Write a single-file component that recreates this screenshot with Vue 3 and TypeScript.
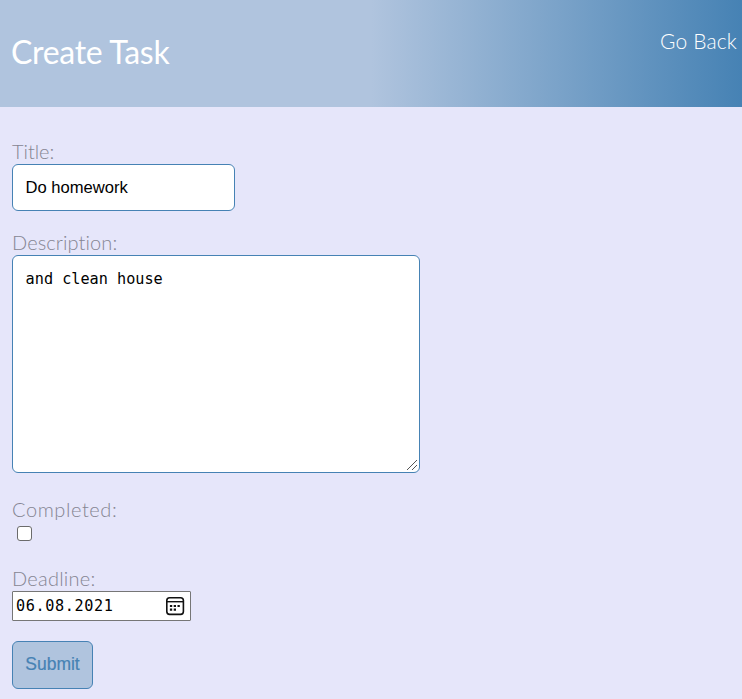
<script setup lang="ts">
import { ref } from 'vue'

const title = ref('Do homework')
const description = ref('and clean house')
const completed = ref(false)
const deadline = ref('06.08.2021')
</script>

<template>
  <div class="page">
    <header class="header">
      <h1>Create Task</h1>
      <a class="back">Go Back</a>
    </header>
    <form class="form" @submit.prevent>
      <label class="label" for="title"><span class="l-title">Title:</span></label>
      <input id="title" v-model="title" class="title" type="text" />
      <label class="label" for="description"><span class="l-description">Description:</span></label>
      <div class="area">
        <textarea id="description" v-model="description" spellcheck="false"></textarea>
        <svg class="grip" width="12" height="12" viewBox="0 0 12 12">
          <path d="M1 11L11 1M6 11L11 6" stroke="#555" stroke-width="1" fill="none" />
        </svg>
      </div>
      <label class="label" for="completed"><span class="l-completed">Completed:</span></label>
      <input id="completed" v-model="completed" class="check" type="checkbox" />
      <label class="label" for="deadline"><span class="l-deadline">Deadline:</span></label>
      <div class="date">
        <input id="deadline" v-model="deadline" type="text" />
        <svg width="20" height="20" viewBox="0 0 20 20">
          <rect x="1.8" y="1.8" width="16.6" height="16.6" rx="2.8" fill="none" stroke="#111" stroke-width="1.6" />
          <path d="M2 5.7H18" stroke="#111" stroke-width="1.4" />
          <path d="M8.7 9h2.3v2.1h-2.3zM12.5 9h2.3v2.1h-2.3zM4.9 9h2.3v2.1h-2.3zM4.9 12.6h2.3v2.1h-2.3zM8.7 12.6h2.3v2.1h-2.3z" fill="#111" />
        </svg>
      </div>
      <button class="submit" type="submit">Submit</button>
    </form>
  </div>
</template>

<style>
body {
  margin: 0;
  background: #e6e6fa;
}
</style>

<style scoped>
* {
  box-sizing: border-box;
}
.page {
  height: 699px;
  overflow: hidden;
  background: #e6e6fa;
  font-family: Lato, "Open Sans", sans-serif;
}
.header {
  display: flex;
  justify-content: space-between;
  height: 107px;
  padding: 0 5px 0 11px;
  color: #fff;
  background: linear-gradient(to right, lightsteelblue 50%, steelblue);
}
h1 {
  margin: 32px 0 0;
  font-size: 32px;
  line-height: 40px;
  font-weight: 400;
  letter-spacing: -0.3px;
  white-space: nowrap;
}
.back {
  margin-top: 27px;
  font-size: 21px;
  line-height: 28px;
  font-weight: 300;
  letter-spacing: 0.15px;
}
.form {
  display: flex;
  flex-direction: column;
  align-items: flex-start;
  padding: 33px 12px 0;
}
.label {
  height: 24px;
  line-height: 22px;
  font-size: 20px;
  font-weight: 300;
  color: #858592;
  white-space: nowrap;
}
.l-title {
  letter-spacing: -0.05px;
}
.l-description {
  letter-spacing: 0.1px;
}
.l-completed {
  letter-spacing: 0.58px;
}
.l-deadline {
  letter-spacing: 0.25px;
}
.title {
  width: 223px;
  height: 47px;
  margin-bottom: 20px;
  padding: 0 12.5px;
  border: 1px solid steelblue;
  border-radius: 6px;
  background: #fff;
  color: #000;
  font: 16.6px "Liberation Sans", sans-serif;
  outline: none;
}
.area {
  position: relative;
  width: 408px;
  height: 218px;
  margin-bottom: 25px;
}
textarea {
  display: block;
  width: 100%;
  height: 100%;
  padding: 13px 12.6px;
  border: 1px solid steelblue;
  border-radius: 6px;
  background: #fff;
  color: #000;
  font: 15.2px/20px "DejaVu Sans Mono", monospace;
  resize: none;
  outline: none;
}
.grip {
  position: absolute;
  right: 2px;
  bottom: 2px;
}
.check {
  appearance: none;
  width: 15px;
  height: 15px;
  margin: 4px 0 26px 5px;
  border: 1px solid #6b6b6b;
  border-radius: 3px;
  background: #fff;
}
.date {
  display: flex;
  align-items: center;
  justify-content: space-between;
  width: 179px;
  height: 30px;
  padding: 0 5px 0 3px;
  border: 1px solid #767676;
  border-radius: 1px;
  background: #fff;
}
.date input {
  width: 120px;
  padding: 0;
  border: 0;
  color: #000;
  font: 15.2px/20px "DejaVu Sans Mono", monospace;
  letter-spacing: 0.6px;
  outline: none;
}
.submit {
  width: 81px;
  height: 48px;
  margin-top: 20px;
  padding: 0 0 2px;
  border: 1px solid steelblue;
  border-radius: 6px;
  background: lightsteelblue;
  color: steelblue;
  font: 17.5px "Liberation Sans", sans-serif;
  -webkit-text-stroke: 0.2px steelblue;
}
</style>
